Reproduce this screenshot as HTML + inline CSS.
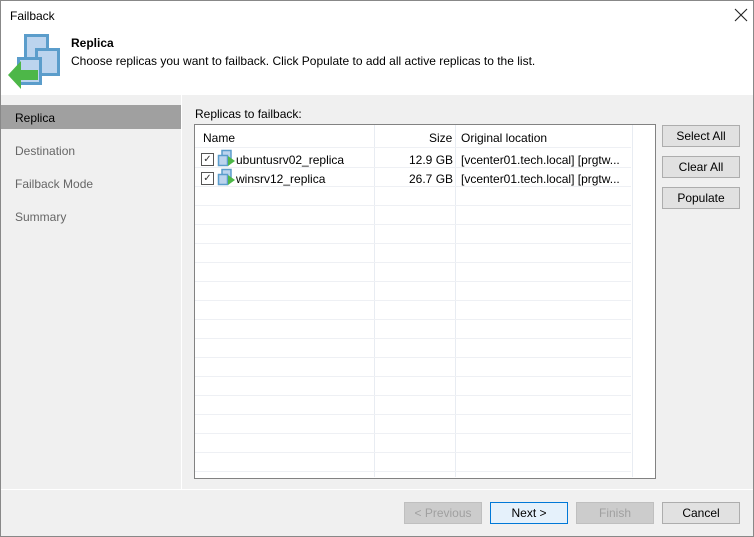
<!DOCTYPE html><html><head><style>
body{margin:0;width:754px;height:537px;overflow:hidden;font-family:"Liberation Sans",sans-serif;font-size:12px;color:#000;}
.win{position:absolute;left:0;top:0;width:752px;height:535px;border:1px solid #888;background:#f0f0f0;}
.a{position:absolute;}
.btn{position:absolute;width:76px;height:20px;border:1px solid #adadad;background:#e1e1e1;text-align:center;line-height:20px;font-size:12px;}
.dis{color:#a0a0a0;background:#cccccc;border-color:#bfbfbf;}
.hl{position:absolute;left:0;width:436px;height:1px;background:#eef0f4;}
.vl{position:absolute;top:0;width:1px;height:352px;background:#e8ecf2;}
.t{position:absolute;white-space:nowrap;}
.cb{position:absolute;width:11px;height:11px;border:1px solid #555;background:#fff;font-size:10px;line-height:11px;text-align:center;color:#333;}
</style></head><body><div class="win">
<div class="a" style="left:0;top:0;width:752px;height:94px;background:#fff"></div>
<div class="t" style="left:9px;top:8px">Failback</div>
<svg class="a" style="left:733px;top:7px" width="14" height="14"><path d="M1 1 L13 13 M13 1 L1 13" stroke="#222" stroke-width="1.1"/></svg>
<svg class="a" style="left:0;top:0" width="70" height="92">
<rect x="24.5" y="34.5" width="22" height="25" fill="#bcd4ee" stroke="#5b9dcb" stroke-width="3"/>
<rect x="35.5" y="48.5" width="22" height="25" fill="#bcd4ee" stroke="#5b9dcb" stroke-width="3"/>
<rect x="17.5" y="57.5" width="22" height="25" fill="#bcd4ee" stroke="#5b9dcb" stroke-width="3"/>
<path d="M7 74 L20 60 L20 69 L37 69 L37 79 L20 79 L20 88 Z" fill="#4db748"/>
</svg>
<div class="t" style="left:70px;top:35px;font-weight:bold">Replica</div>
<div class="t" style="left:70px;top:53px">Choose replicas you want to failback. Click Populate to add all active replicas to the list.</div>
<div class="a" style="left:180px;top:94px;width:1px;height:394px;background:#fff"></div>
<div class="a" style="left:0;top:104px;width:180px;height:24px;background:#a0a0a0"></div>
<div class="t" style="left:14px;top:110px">Replica</div>
<div class="t" style="left:14px;top:143px;color:#666">Destination</div>
<div class="t" style="left:14px;top:176px;color:#666">Failback Mode</div>
<div class="t" style="left:14px;top:209px;color:#666">Summary</div>
<div class="t" style="left:194px;top:106px">Replicas to failback:</div>
<div class="a" style="left:193px;top:123px;width:460px;height:353px;border:1px solid #828282;background:#fff;overflow:hidden">
<div class="vl" style="left:179px"></div><div class="vl" style="left:260px"></div><div class="vl" style="left:437px"></div>
<div class="hl" style="top:22px"></div><div class="hl" style="top:42px"></div><div class="hl" style="top:61px"></div><div class="hl" style="top:80px"></div><div class="hl" style="top:99px"></div><div class="hl" style="top:118px"></div><div class="hl" style="top:137px"></div><div class="hl" style="top:156px"></div><div class="hl" style="top:175px"></div><div class="hl" style="top:194px"></div><div class="hl" style="top:213px"></div><div class="hl" style="top:232px"></div><div class="hl" style="top:251px"></div><div class="hl" style="top:270px"></div><div class="hl" style="top:289px"></div><div class="hl" style="top:308px"></div><div class="hl" style="top:327px"></div><div class="hl" style="top:346px"></div>
<div class="t" style="left:8px;top:6px">Name</div><div class="t" style="left:234px;top:6px">Size</div><div class="t" style="left:266px;top:6px">Original location</div>
<div class="cb" style="left:6px;top:28px">✓</div>
<svg class="a" style="left:22px;top:24px" width="18" height="18"><rect x="5" y="1.5" width="9" height="9" fill="#bcd4ee" stroke="#5b9dcb" stroke-width="1.5"/><rect x="1.5" y="6.5" width="9" height="10" fill="#bcd4ee" stroke="#5b9dcb" stroke-width="1.5"/><path d="M11 7 L18 12 L11 17Z" fill="#4db748"/></svg>
<div class="t" style="left:41px;top:28px">ubuntusrv02_replica</div><div class="t" style="left:214px;top:28px">12.9 GB</div><div class="t" style="left:266px;top:28px">[vcenter01.tech.local] [prgtw...</div>
<div class="cb" style="left:6px;top:47px">✓</div>
<svg class="a" style="left:22px;top:43px" width="18" height="18"><rect x="5" y="1.5" width="9" height="9" fill="#bcd4ee" stroke="#5b9dcb" stroke-width="1.5"/><rect x="1.5" y="6.5" width="9" height="10" fill="#bcd4ee" stroke="#5b9dcb" stroke-width="1.5"/><path d="M11 7 L18 12 L11 17Z" fill="#4db748"/></svg>
<div class="t" style="left:41px;top:47px">winsrv12_replica</div><div class="t" style="left:214px;top:47px">26.7 GB</div><div class="t" style="left:266px;top:47px">[vcenter01.tech.local] [prgtw...</div>
</div>
<div class="btn" style="left:661px;top:124px">Select All</div>
<div class="btn" style="left:661px;top:155px">Clear All</div>
<div class="btn" style="left:661px;top:186px">Populate</div>
<div class="a" style="left:0;top:488px;width:752px;height:1px;background:#fff"></div>
<div class="btn dis" style="left:403px;top:501px">&lt; Previous</div>
<div class="btn" style="left:489px;top:501px;background:#e5f1fb;border-color:#0078d7">Next &gt;</div>
<div class="btn dis" style="left:575px;top:501px">Finish</div>
<div class="btn" style="left:661px;top:501px">Cancel</div>
</div></body></html>
